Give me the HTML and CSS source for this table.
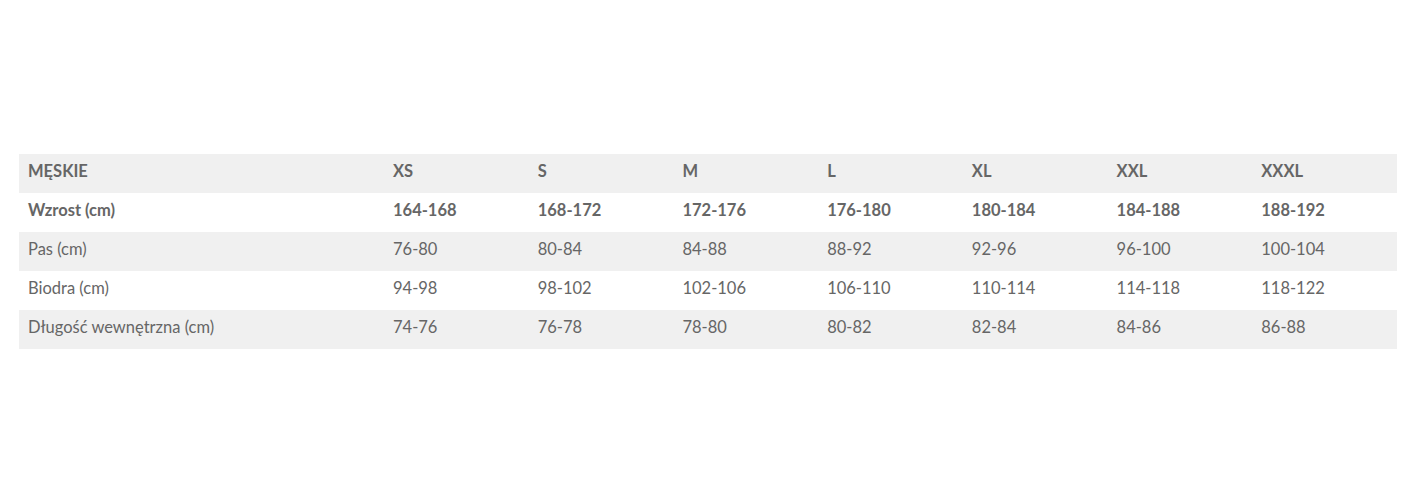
FILE: index.html
```html
<!DOCTYPE html>
<html lang="pl">
<head>
<meta charset="utf-8">
<title>Tabela rozmiarów</title>
<link rel="stylesheet" href="styles.css">
</head>
<body>
<div class="page">
  <div class="size-table">
    <div class="row head">
      <div class="cell first">MĘSKIE</div>
      <div class="cell">XS</div><div class="cell">S</div><div class="cell">M</div><div class="cell">L</div><div class="cell">XL</div><div class="cell">XXL</div><div class="cell">XXXL</div>
    </div>
    <div class="row bold">
      <div class="cell first">Wzrost (cm)</div>
      <div class="cell">164-168</div><div class="cell">168-172</div><div class="cell">172-176</div><div class="cell">176-180</div><div class="cell">180-184</div><div class="cell">184-188</div><div class="cell">188-192</div>
    </div>
    <div class="row shade">
      <div class="cell first">Pas (cm)</div>
      <div class="cell">76-80</div><div class="cell">80-84</div><div class="cell">84-88</div><div class="cell">88-92</div><div class="cell">92-96</div><div class="cell">96-100</div><div class="cell">100-104</div>
    </div>
    <div class="row">
      <div class="cell first">Biodra (cm)</div>
      <div class="cell">94-98</div><div class="cell">98-102</div><div class="cell">102-106</div><div class="cell">106-110</div><div class="cell">110-114</div><div class="cell">114-118</div><div class="cell">118-122</div>
    </div>
    <div class="row shade">
      <div class="cell first">Długość wewnętrzna (cm)</div>
      <div class="cell">74-76</div><div class="cell">76-78</div><div class="cell">78-80</div><div class="cell">80-82</div><div class="cell">82-84</div><div class="cell">84-86</div><div class="cell">86-88</div>
    </div>
  </div>
</div>
</body>
</html>
```
FILE: styles.css
```css
html, body {
  margin: 0;
  padding: 0;
  background: #fff;
}
.page {
  padding: 154px 16px 0 19px;
  font-family: Lato, "Open Sans", sans-serif;
  font-size: 16.5px;
  color: #666;
}
.size-table {
  display: flex;
  flex-direction: column;
}
.row {
  display: grid;
  grid-template-columns: 365px repeat(7, 1fr);
  height: 39px;
  align-items: center;
  padding-bottom: 5px;
  box-sizing: border-box;
}
.row.head {
  background: #f0f0f0;
  font-weight: 700;
}
.row.bold {
  font-weight: 700;
}
.row.shade {
  background: #f0f0f0;
}
.cell {
  padding-left: 9px;
  white-space: nowrap;
}
```
